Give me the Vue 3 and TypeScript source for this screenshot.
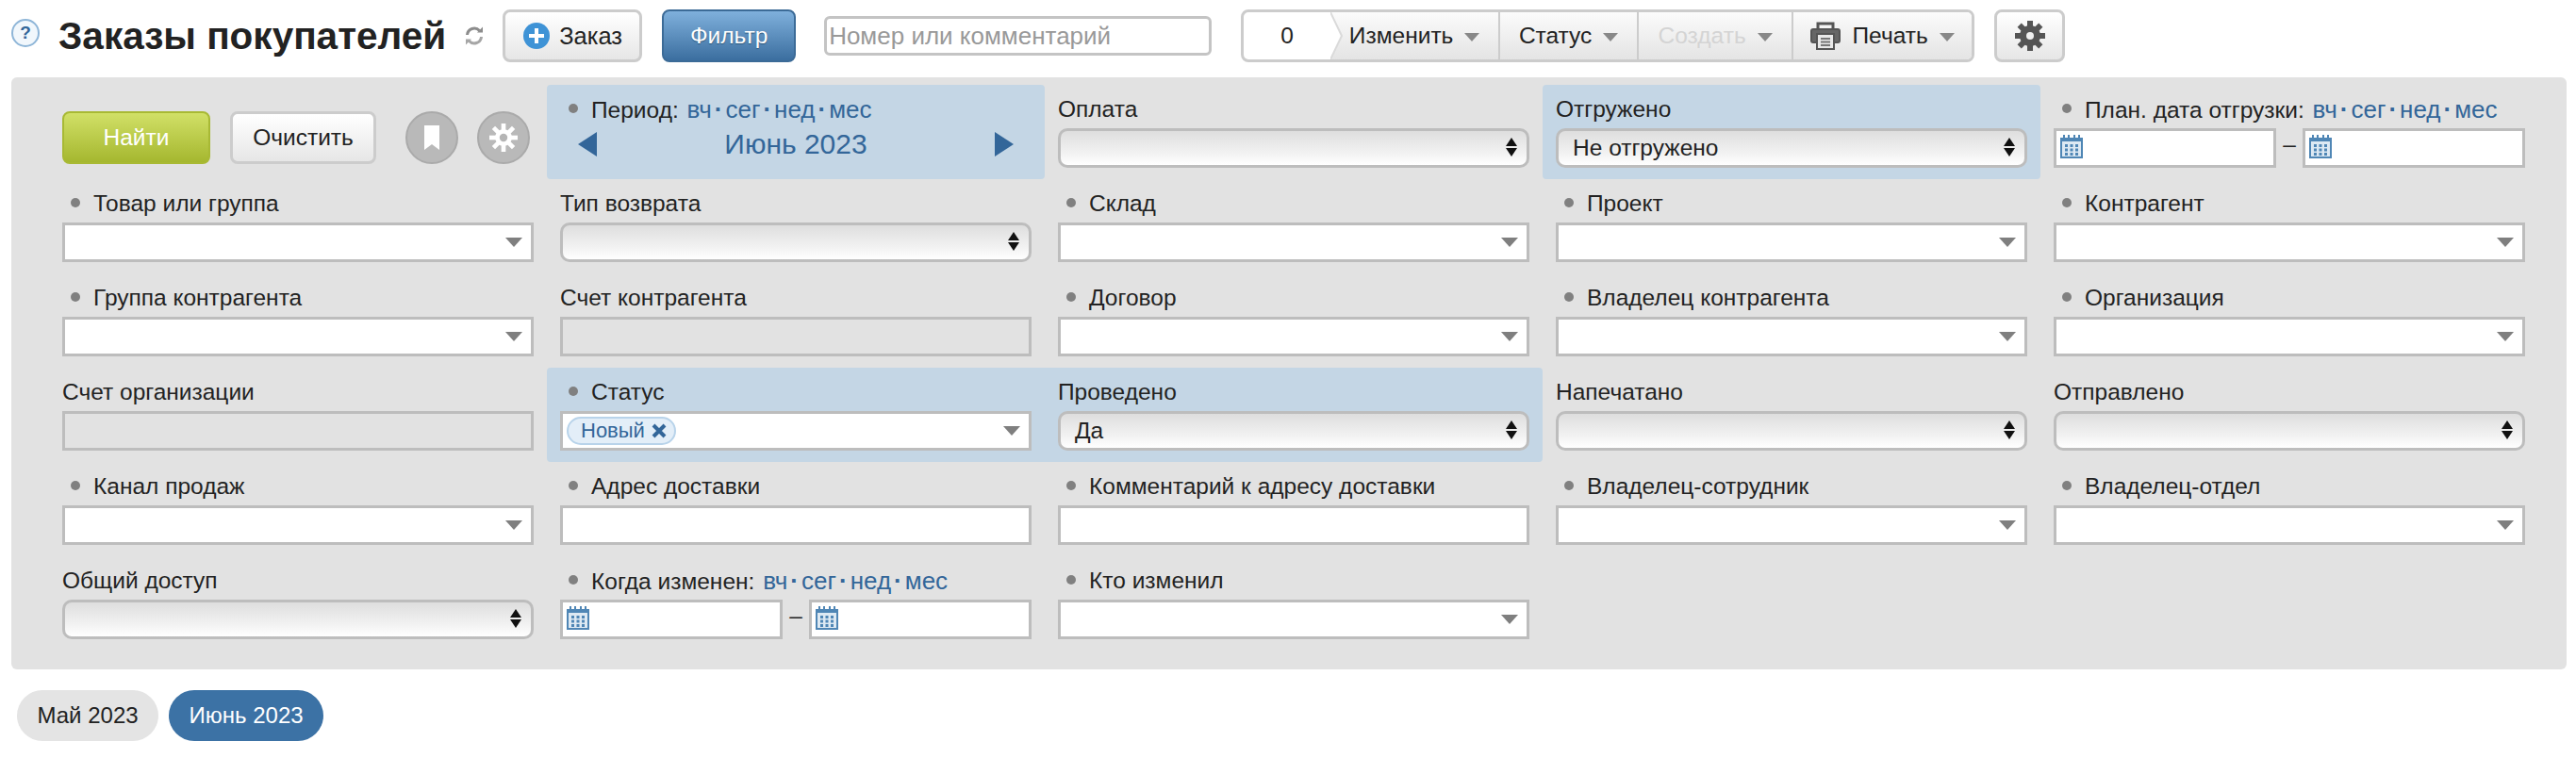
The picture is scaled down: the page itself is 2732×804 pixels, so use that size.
<template>
  <div class="page">
    <header class="topbar">
      <span class="help">?</span>
      <h1 class="title">Заказы покупателей</h1>
      <svg class="refresh" viewBox="0 0 20 20" width="20" height="20">
        <path d="M2.5 9A7.5 7.5 0 0 1 15.5 4.5" fill="none" stroke="#8c8c8c" stroke-width="3" />
        <path d="M17.5 11A7.5 7.5 0 0 1 4.5 15.5" fill="none" stroke="#a6a6a6" stroke-width="3" />
        <path d="M13 6.5h6V0.5z" fill="#8c8c8c" />
        <path d="M7 13.5H1v6z" fill="#a6a6a6" />
      </svg>
      <button class="btn btn-order">
        <svg viewBox="0 0 28 28" width="28" height="28">
          <circle cx="14" cy="14" r="14" fill="#3f93d6" />
          <path d="M12 6h4v6h6v4h-6v6h-4v-6H6v-4h6z" fill="#fff" />
        </svg>
        Заказ
      </button>
      <button class="btn btn-filter">Фильтр</button>
      <input class="search" type="text" placeholder="Номер или комментарий" />
      <div class="actions">
        <div class="count">
          0
          <svg class="chevron" viewBox="0 0 13 50" width="13" height="50" preserveAspectRatio="none">
            <path d="M0 0L12 25L0 50z" fill="#fff" />
            <path d="M0 0L12 25L0 50" fill="none" stroke="#dadada" stroke-width="2" />
          </svg>
        </div>
        <div v-for="a in actions" :key="a.text" class="action" :class="{ off: a.off }" :style="{ width: a.width + 'px' }">
          <svg v-if="a.printer" viewBox="0 0 32 30" width="32" height="30">
            <path d="M8 8V2h16v6" fill="none" stroke="#555" stroke-width="3" />
            <path d="M6 22H3a2 2 0 0 1-2-2V10a2 2 0 0 1 2-2h26a2 2 0 0 1 2 2v10a2 2 0 0 1-2 2h-3" fill="#666" stroke="#555" stroke-width="2" />
            <rect x="7" y="13" width="18" height="16" fill="#e8e8e8" stroke="#555" stroke-width="2" />
            <path d="M11 18h10M11 21.500h10M11 25h10" stroke="#777" stroke-width="2" />
          </svg>
          {{ a.text }}
          <i class="caret-small"></i>
        </div>
      </div>
      <button class="btn btn-gear">
        <svg viewBox="0 0 32 32" width="32" height="32">
          <g fill="#555">
            <rect v-for="r in teeth" :key="r" x="13" y="0" width="6" height="32" :transform="`rotate(${r} 16 16)`" />
            <circle cx="16" cy="16" r="11" />
          </g>
          <circle cx="16" cy="16" r="4" fill="#efefef" />
        </svg>
      </button>
    </header>

    <section class="panel">
      <div class="grid">
        <template v-for="(c, i) in cells" :key="i">
          <div v-if="c.kind === 'buttons'" class="cell find-cell">
            <button class="btn btn-find">Найти</button>
            <button class="btn btn-clear">Очистить</button>
            <span class="round round-first">
              <svg viewBox="0 0 16 26" width="16" height="26">
                <path d="M0 0h16v26l-8-6-8 6z" fill="#fff" />
              </svg>
            </span>
            <span class="round">
              <svg viewBox="0 0 32 32" width="30" height="30">
                <g fill="#fff">
                  <rect v-for="r in teeth" :key="r" x="13.500" y="0" width="5" height="32" :transform="`rotate(${r} 16 16)`" />
                  <circle cx="16" cy="16" r="9.500" />
                </g>
                <circle cx="16" cy="16" r="4.500" fill="#b5b5b5" />
              </svg>
            </span>
          </div>

          <div v-else class="cell" :class="[c.hl ? 'hl-' + c.hl : '']">
            <div class="label" :class="{ dotted: c.dot }">
              {{ c.label }}
              <span v-if="c.links" class="links">вч<b>·</b>сег<b>·</b>нед<b>·</b>мес</span>
            </div>

            <div v-if="c.kind === 'period'" class="period">
              <i class="arrow arrow-left"></i>
              <span class="month">Июнь 2023</span>
              <i class="arrow arrow-right"></i>
            </div>

            <div v-else-if="c.kind === 'select'" class="field native" :class="{ filled: c.value }">
              {{ c.value }}
              <span class="updown"><i></i><i></i></span>
            </div>

            <div v-else-if="c.kind === 'combo'" class="field combo">
              <span v-if="c.value" class="tag">
                {{ c.value }}
                <svg viewBox="0 0 16 16" width="16" height="16">
                  <path d="M2 2l12 12M14 2L2 14" stroke="#336699" stroke-width="4" />
                </svg>
              </span>
              <i class="caret"></i>
            </div>

            <div v-else-if="c.kind === 'dates'" class="dates">
              <div v-for="n in 2" :key="n" class="field date">
                <svg viewBox="0 0 24 26" width="24" height="26">
                  <path d="M0 4h24v22H0z" fill="#4f86b5" />
                  <path d="M3 1h2v5H3zM8 1h2v5H8zM14 1h2v5h-2zM19 1h2v5h-2z" fill="#4f86b5" />
                  <rect x="2" y="8" width="20" height="16" fill="#dde9f3" />
                  <g fill="#4f86b5">
                    <rect v-for="d in dots" :key="d[0] + '-' + d[1]" :x="d[0]" :y="d[1]" width="3" height="3" />
                  </g>
                </svg>
              </div>
              <span class="dash">–</span>
            </div>

            <div v-else-if="c.kind === 'input'" class="field"></div>
            <div v-else-if="c.kind === 'disabled'" class="field disabled"></div>
          </div>
        </template>
      </div>
    </section>

    <nav class="months">
      <a class="pill">Май 2023</a>
      <a class="pill active">Июнь 2023</a>
    </nav>
  </div>
</template>

<script setup lang="ts">
type Cell = {
  kind: 'buttons' | 'period' | 'select' | 'combo' | 'dates' | 'input' | 'disabled'
  label?: string
  dot?: boolean
  links?: boolean
  value?: string
  hl?: 'one' | 'left' | 'right'
}

const actions = [
  { text: 'Изменить', width: 180 },
  { text: 'Статус', width: 147 },
  { text: 'Создать', width: 164, off: true },
  { text: 'Печать', width: 189, printer: true },
]

const teeth = [0, 45, 90, 135]
const dots = [
  [5, 11], [10.5, 11], [16, 11],
  [5, 15.5], [10.5, 15.5], [16, 15.5],
  [5, 20], [10.5, 20], [16, 20],
]

const cells: Cell[] = [
  { kind: 'buttons' },
  { kind: 'period', label: 'Период:', dot: true, links: true, hl: 'one' },
  { kind: 'select', label: 'Оплата' },
  { kind: 'select', label: 'Отгружено', value: 'Не отгружено', hl: 'one' },
  { kind: 'dates', label: 'План. дата отгрузки:', dot: true, links: true },

  { kind: 'combo', label: 'Товар или группа', dot: true },
  { kind: 'select', label: 'Тип возврата' },
  { kind: 'combo', label: 'Склад', dot: true },
  { kind: 'combo', label: 'Проект', dot: true },
  { kind: 'combo', label: 'Контрагент', dot: true },

  { kind: 'combo', label: 'Группа контрагента', dot: true },
  { kind: 'disabled', label: 'Счет контрагента' },
  { kind: 'combo', label: 'Договор', dot: true },
  { kind: 'combo', label: 'Владелец контрагента', dot: true },
  { kind: 'combo', label: 'Организация', dot: true },

  { kind: 'disabled', label: 'Счет организации' },
  { kind: 'combo', label: 'Статус', dot: true, value: 'Новый', hl: 'left' },
  { kind: 'select', label: 'Проведено', value: 'Да', hl: 'right' },
  { kind: 'select', label: 'Напечатано' },
  { kind: 'select', label: 'Отправлено' },

  { kind: 'combo', label: 'Канал продаж', dot: true },
  { kind: 'input', label: 'Адрес доставки', dot: true },
  { kind: 'input', label: 'Комментарий к адресу доставки', dot: true },
  { kind: 'combo', label: 'Владелец-сотрудник', dot: true },
  { kind: 'combo', label: 'Владелец-отдел', dot: true },

  { kind: 'select', label: 'Общий доступ' },
  { kind: 'dates', label: 'Когда изменен:', dot: true, links: true },
  { kind: 'combo', label: 'Кто изменил', dot: true },
]
</script>

<style>
body {
  background: #fff;
}
</style>

<style scoped>
.page {
  width: 2732px;
  height: 804px;
  overflow: hidden;
  font-family: "Liberation Sans", Arial, sans-serif;
  font-size: 24.5px;
  color: #222;
}

.topbar {
  display: flex;
  align-items: center;
  height: 56px;
  padding: 10px 0 0 12px;
}

.help {
  width: 30px;
  height: 30px;
  margin-top: -6px;
  box-sizing: border-box;
  border: 2px solid #8fb6d8;
  border-radius: 50%;
  background: #f1f7fc;
  color: #336699;
  font-size: 19px;
  font-weight: 700;
  line-height: 26px;
  text-align: center;
}

.title {
  margin: 0 0 0 20px;
  font-size: 40.5px;
  line-height: 56px;
  font-weight: 700;
  white-space: nowrap;
}

.refresh {
  margin-left: 20px;
}

.btn {
  box-sizing: border-box;
  height: 56px;
  padding: 0;
  font-family: inherit;
  font-size: 24.5px;
  color: #222;
  border: 3px solid #ccc;
  border-radius: 8px;
  background: linear-gradient(#fff, #e6e6e6);
}

.btn-order {
  display: flex;
  align-items: center;
  gap: 10px;
  width: 148px;
  margin-left: 20px;
  padding-left: 19px;
  font-size: 25.5px;
}

.btn-filter {
  width: 142px;
  margin-left: 21px;
  color: #fff;
  border: 2px solid #3c6b97;
  background: linear-gradient(#7fb0dc, #3b6e9f);
  text-shadow: 0 1px 1px #2c5679;
}

.search {
  box-sizing: border-box;
  width: 411px;
  height: 42px;
  margin-left: 30px;
  padding: 0 2px;
  border: 3px solid #c4c4c4;
  border-radius: 6px;
  font-family: inherit;
  font-size: 26px;
  outline: none;
}

.search::placeholder {
  color: #999;
  opacity: 1;
}

.actions {
  display: flex;
  box-sizing: border-box;
  height: 56px;
  margin-left: 31px;
  border: 3px solid #ccc;
  border-radius: 8px;
}

.count {
  position: relative;
  width: 92px;
  flex: none;
  box-sizing: border-box;
  line-height: 50px;
  text-align: center;
}

.chevron {
  position: absolute;
  top: 0;
  right: -13px;
  z-index: 1;
}

.action {
  display: flex;
  align-items: center;
  justify-content: center;
  gap: 12px;
  box-sizing: border-box;
  border-right: 2px solid #ccc;
  background: linear-gradient(#fbfbfb, #e4e4e4);
  white-space: nowrap;
}

.action:last-child {
  border-right: none;
  border-radius: 0 5px 5px 0;
}

.action.off {
  color: #d4d4d4;
}

.caret-small {
  width: 0;
  height: 0;
  margin-top: 3px;
  border-left: 8px solid transparent;
  border-right: 8px solid transparent;
  border-top: 9px solid #888;
}

.btn-gear {
  display: flex;
  align-items: center;
  justify-content: center;
  width: 75px;
  margin-left: 21px;
}

.panel {
  box-sizing: border-box;
  height: 628px;
  margin: 16px 10px 0 12px;
  padding: 8px 0 0 40px;
  border-radius: 6px;
  background: #e2e2e2;
}

.grid {
  display: grid;
  grid-template-columns: repeat(5, 528px);
  grid-auto-rows: 100px;
}

.cell {
  box-sizing: border-box;
  padding: 0 14px;
}

.hl-one,
.hl-left,
.hl-right {
  background: #c4d6e5;
}

.hl-one {
  border-radius: 4px;
}

.hl-left {
  border-radius: 4px 0 0 4px;
}

.hl-right {
  border-radius: 0 4px 4px 0;
}

.find-cell {
  display: flex;
  align-items: flex-start;
  padding-top: 28px;
}

.btn-find {
  width: 157px;
  color: #fff;
  border: 2px solid #a8b934;
  background: linear-gradient(#d1e067, #a5b72f);
}

.btn-clear {
  width: 155px;
  margin-left: 21px;
}

.round {
  display: flex;
  align-items: center;
  justify-content: center;
  width: 56px;
  height: 56px;
  margin-left: 20px;
  box-sizing: border-box;
  border: 2px solid #aaa;
  border-radius: 50%;
  background: #b9b9b9;
}

.round-first {
  margin-left: 31px;
}

.label {
  position: relative;
  height: 46px;
  line-height: 52px;
  white-space: nowrap;
}

.label.dotted {
  padding-left: 33px;
}

.label.dotted::before {
  content: "";
  position: absolute;
  left: 9px;
  top: 20px;
  width: 10px;
  height: 10px;
  border-radius: 50%;
  background: #808080;
}

.links {
  margin-left: 2px;
  font-size: 26px;
  color: #336699;
}

.links b {
  margin: 0 3px;
}

.period {
  display: flex;
  align-items: center;
  justify-content: space-between;
  height: 30px;
  padding: 0 19px;
  margin-top: 2px;
}

.month {
  font-size: 30px;
  color: #336699;
}

.arrow {
  width: 0;
  height: 0;
  border-top: 13px solid transparent;
  border-bottom: 13px solid transparent;
}

.arrow-left {
  border-right: 20px solid #336699;
}

.arrow-right {
  border-left: 20px solid #336699;
}

.field {
  position: relative;
  box-sizing: border-box;
  height: 42px;
  border: 3px solid #bdbdbd;
  background: #fff;
}

.field.disabled {
  background: #e2e2e2;
}

.native {
  padding-left: 15px;
  line-height: 36px;
  border-radius: 10px;
  background: linear-gradient(#dedede, #f2f2f2 65%, #fff);
}

.updown {
  position: absolute;
  right: 10px;
  top: 7px;
  display: flex;
  flex-direction: column;
  gap: 2px;
}

.updown i {
  width: 0;
  height: 0;
  border-left: 6px solid transparent;
  border-right: 6px solid transparent;
  border-bottom: 9px solid #111;
}

.updown i:last-child {
  border-bottom: none;
  border-top: 9px solid #111;
}

.caret {
  position: absolute;
  right: 9px;
  top: 13px;
  width: 0;
  height: 0;
  border-left: 9px solid transparent;
  border-right: 9px solid transparent;
  border-top: 10px solid #7f7f7f;
}

.tag {
  position: absolute;
  left: 4px;
  top: 3px;
  display: flex;
  align-items: center;
  gap: 7px;
  box-sizing: border-box;
  width: 116px;
  height: 30px;
  padding-left: 13px;
  border: 2px solid #b8d3ea;
  border-radius: 15px;
  background: #e3eef8;
  color: #336699;
  font-size: 22px;
  white-space: nowrap;
}

.dates {
  display: grid;
  grid-template-columns: 1fr 1fr;
  column-gap: 28px;
  position: relative;
}

.date svg {
  position: absolute;
  left: 4px;
  top: 3px;
}

.dash {
  position: absolute;
  left: 50%;
  top: 3px;
  transform: translateX(-50%);
}

.months {
  display: flex;
  gap: 11px;
  margin: 22px 0 0 18px;
  font-size: 24px;
}

.pill {
  height: 54px;
  padding: 0 21.5px;
  border-radius: 27px;
  background: #e4e4e4;
  line-height: 54px;
}

.pill.active {
  background: #3c72a5;
  color: #fff;
}
</style>
